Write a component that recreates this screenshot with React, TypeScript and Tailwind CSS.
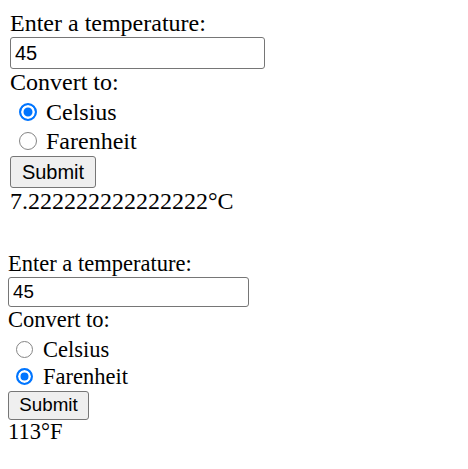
import { useState } from "react";

type Unit = "C" | "F";

// every class written out in full, one set per size of the form
const big = {
  wrap: "pl-[10px] pt-[11px]",
  text: "text-[24px]",
  line: "leading-[24px]",
  convert: "leading-[26px]",
  input: "mt-[2px] h-[32px] w-[255px] pl-[4px] text-[20px]",
  radios: "mt-[2px]",
  row: "h-[29px]",
  radio: "ml-[9px] h-[18px] w-[18px] checked:shadow-[inset_0_0_0_2.5px_#fff]",
  label: "ml-[9px]",
  button: "mt-[1px] h-[32px] w-[86px] text-[20px]",
  result: "leading-[26px]",
};

const small = {
  wrap: "pl-[8px] pt-[38px]",
  text: "text-[22.5px]",
  line: "leading-[24px]",
  convert: "leading-[26px]",
  input: "mt-[1px] h-[30px] w-[241px] pl-[4px] text-[18.75px]",
  radios: "mt-[3px]",
  row: "h-[27px]",
  radio: "ml-[8px] h-[17px] w-[17px] checked:shadow-[inset_0_0_0_2.5px_#fff]",
  label: "ml-[10px]",
  button: "mt-[1px] h-[29px] w-[81px] text-[18.75px]",
  result: "leading-[24px]",
};

function convert(value: string, unit: Unit) {
  const n = parseFloat(value);
  if (isNaN(n)) return "";
  return unit === "C" ? `${((n - 32) * 5) / 9}°C` : `${(n * 9) / 5 + 32}°F`;
}

function Converter({ id, size, start }: { id: string; size: typeof big; start: Unit }) {
  const [temp, setTemp] = useState("45");
  const [unit, setUnit] = useState<Unit>(start);
  const [result, setResult] = useState(convert("45", start));

  return (
    <form
      className={`flex flex-col items-start text-black [font-family:'Liberation_Serif',serif] ${size.wrap} ${size.text}`}
      onSubmit={(e) => {
        e.preventDefault();
        setResult(convert(temp, unit));
      }}
    >
      <label htmlFor={`${id}-temp`} className={size.line}>
        Enter a temperature:
      </label>
      <input
        id={`${id}-temp`}
        type="text"
        value={temp}
        onChange={(e) => setTemp(e.target.value)}
        className={`rounded-[3px] border border-[#767676] bg-white text-black outline-none [font-family:'Liberation_Sans',Arial,sans-serif] ${size.input}`}
      />
      <div className={size.convert}>Convert to:</div>

      {/* Celsius / Farenheit */}
      <div className={`flex flex-col ${size.radios}`}>
        {(["C", "F"] as Unit[]).map((u) => (
          <label key={u} className={`flex items-center ${size.row}`}>
            <input
              type="radio"
              name={`${id}-unit`}
              checked={unit === u}
              onChange={() => setUnit(u)}
              className={`m-0 shrink-0 appearance-none rounded-full border-[1.5px] border-[#858585] bg-white checked:border-[2.5px] checked:border-[#0075ff] checked:bg-[#0075ff] ${size.radio}`}
            />
            <span className={size.label}>{u === "C" ? "Celsius" : "Farenheit"}</span>
          </label>
        ))}
      </div>

      <button
        type="submit"
        className={`flex items-center justify-center rounded-[3px] border border-[#767676] bg-[#efefef] text-black [font-family:'Liberation_Sans',Arial,sans-serif] ${size.button}`}
      >
        Submit
      </button>
      <div className={size.result}>{result}</div>
    </form>
  );
}

export default function App() {
  return (
    <div className="min-h-screen bg-white">
      <Converter id="a" size={big} start="C" />
      <Converter id="b" size={small} start="F" />
    </div>
  );
}
